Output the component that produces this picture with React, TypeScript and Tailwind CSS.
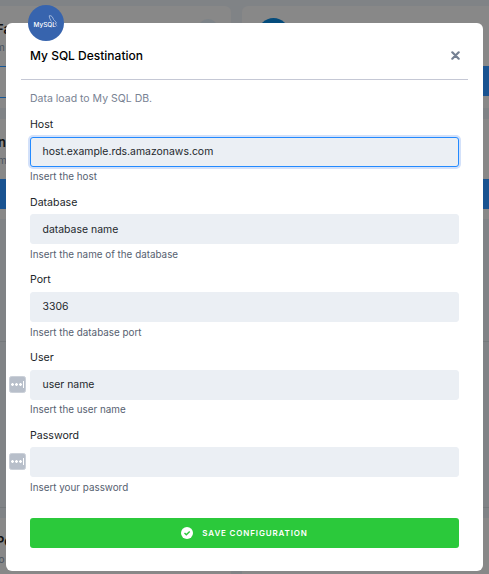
import type { ReactNode } from "react";

const fields = [
  { label: "Host", value: "host.example.rds.amazonaws.com", hint: "Insert the host", focus: true },
  { label: "Database", value: "database name", hint: "Insert the name of the database" },
  { label: "Port", value: "3306", hint: "Insert the database port" },
  { label: "User", value: "user name", hint: "Insert the user name", key: true },
  { label: "Password", value: "", hint: "Insert your password", key: true },
];

function KeyBadge() {
  return (
    <svg className="absolute -left-[21px] top-[6px] size-[17px]" viewBox="0 0 17 17">
      <rect x=".5" y=".5" width="16" height="16" rx="2" fill="#b8bfca" stroke="#cbd0d8" />
      <g stroke="#fff">
        <path d="M2 8.500h3M3.500 7v3M6 8.500h3M7.500 7v3M10 8.500h3M11.500 7v3" strokeWidth="1.300" />
        <path d="M14.500 5v7" />
      </g>
    </svg>
  );
}

function Heading({ title, note }: { title: string; note: string }) {
  return (
    <div className="-ml-[4px] whitespace-nowrap">
      <div className="text-[13px] font-semibold leading-5 text-[#111]">{title}</div>
      <div className="text-[10px] leading-4 text-[#4a535e]">{note}</div>
    </div>
  );
}

function Card({ className, children }: { className: string; children?: ReactNode }) {
  return <div className={`bg-[#888] ${className}`}>{children}</div>;
}

function Backdrop() {
  return (
    <div className="flex h-full flex-col bg-[#808386] pt-[6px]">
      <div className="flex h-[102px] shrink-0 gap-[11px]">
        <Card className="flex w-[231px] flex-col justify-between rounded-r-md pb-[10px] pt-[13px]">
          <div className="flex items-start justify-between pr-[13px]">
            <Heading title="Fa" note="m" />
            <div className="size-5 rounded-full bg-[#7d8388]" />
          </div>
          <div className="h-[32px] w-4 border-y border-[#165696]" />
        </Card>
        <Card className="flex flex-1 flex-col justify-between rounded-l-md pb-[12px] pl-4 pt-[12px]">
          <div className="size-[31px] rounded-full bg-[#054c7c]" />
          <div className="h-[30px] bg-[#195391]" />
        </Card>
      </div>
      <Card className="mt-[11px] flex h-[100px] shrink-0 flex-col justify-between pb-[10px] pt-[13px]">
        <div className="pl-[2px]">
          <Heading title="n" note="m" />
        </div>
        <div className="h-[30px] bg-[#195391]" />
      </Card>
      <div className="h-[123px] shrink-0 border-b border-[#75797c]" />
      <div className="h-[166px] shrink-0 border-b border-[#75797c]" />
      <div className="mt-[10px] flex flex-1 gap-[11px]">
        <Card className="w-[231px] pt-[13px]">
          <Heading title="Po" note="lo" />
        </Card>
        <Card className="flex-1" />
      </div>
    </div>
  );
}

export default function App() {
  return (
    <div className="relative h-[574px] w-[489px] overflow-hidden font-['Inter',sans-serif]">
      <Backdrop />
      <main className="absolute inset-x-[6px] bottom-[3px] top-[23px] rounded-[6px] bg-white px-[15px]">
        <svg className="absolute -top-[18px] left-[22px] size-9" viewBox="0 0 36 36">
          <circle cx="18" cy="18" r="18" fill="#3764ae" />
          <text x="5.500" y="21.700" fill="#fff" fontSize="5.500" fontWeight="500" fontFamily="Inter, sans-serif" textLength="22.500" lengthAdjust="spacingAndGlyphs">MySQL</text>
          <path d="M23.500 16.500c-1-1.500-2.500-4-2.200-5.800 2.500-.6 3.500 1.800 4.300 3.900.8 1.200 2.600 1.900 2.800 3.600l-1.500.4 2.300 2.200" fill="none" stroke="#c9d7ee" strokeWidth=".7" />
        </svg>
        <header className="flex h-[57px] items-center justify-between border-b border-[#c5c8d5] pl-[9px] pr-[8px] pt-[9.5px]">
          <h1 className="text-[12px] font-medium leading-5 text-black">My SQL Destination</h1>
          <svg className="size-[9px]" viewBox="0 0 9 9" aria-label="Close">
            <path d="M1.300 1.300l6.400 6.400M7.700 1.300L1.300 7.700" stroke="#748092" strokeWidth="2.200" strokeLinecap="round" />
          </svg>
        </header>
        <div className="px-[9px]">
          <p className="mt-[11px] h-4 text-[10.5px] leading-4 text-[#788293]">Data load to My SQL DB.</p>
          <div className="mt-[10.3px]">
            {fields.map((f) => (
              <div key={f.label} className="h-[77.6px]">
                <label className="block h-4 text-[10.6px] leading-4 text-[#212529]">{f.label}</label>
                <div className="relative mt-[3.5px]">
                  {f.key && <KeyBadge />}
                  <div className={`flex h-[30px] items-center rounded-[3px] border bg-[#ebeff4] px-[11.5px] pt-[0.4px] text-[10.45px] text-[#24282d] ${f.focus ? "border-[#238aff] shadow-[0_0_0_2px_#d3e1fa]" : "border-[#ebeff4]"}`}>
                    {f.value}
                  </div>
                </div>
                <p className="mt-[1.6px] text-[9.85px] leading-4 text-[#566170]">{f.hint}</p>
              </div>
            ))}
          </div>
          <button className="mt-[12.7px] flex h-[30px] w-full items-center justify-center gap-[9px] rounded-[3px] bg-[#2bc93b] text-[8px] font-semibold tracking-[0.85px] text-white">
            <svg className="size-3" viewBox="0 0 12 12">
              <circle cx="6" cy="6" r="6" fill="white" />
              <path d="M3.500 6l1.800 1.800L8.700 4.500" fill="none" stroke="#2bc93b" strokeWidth="1.400" />
            </svg>
            SAVE CONFIGURATION
          </button>
        </div>
      </main>
    </div>
  );
}
